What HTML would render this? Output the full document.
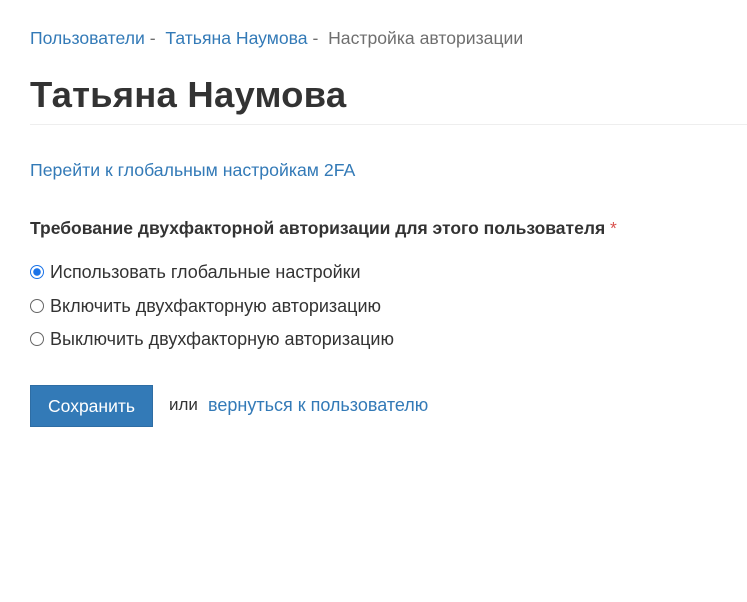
<!DOCTYPE html>
<html><head><meta charset="utf-8"><style>
body{margin:0;background:#fff;font-family:"Liberation Sans",sans-serif;color:#333;}
.a{position:absolute;white-space:nowrap}
a{color:#337ab7;text-decoration:none}
.r{position:absolute;left:30px;width:14px;height:14px;border:1px solid #666;border-radius:50%;box-sizing:border-box}
</style></head><body>
<div class="a" style="left:30px;top:28px;font-size:17.6px;color:#6f6f6f"><a>Пользователи</a> - &nbsp;<a>Татьяна Наумова</a> - &nbsp;Настройка авторизации</div>
<div class="a" style="left:30px;top:74px;font-size:36.5px;font-weight:bold;color:#333;letter-spacing:0.2px">Татьяна Наумова</div>
<div class="a" style="left:30px;top:124px;width:717px;height:1px;background:#eee"></div>
<div class="a" style="left:30px;top:160px;font-size:17.7px"><a>Перейти к глобальным настройкам 2FA</a></div>
<div class="a" style="left:30px;top:218px;font-size:17.5px;font-weight:bold;color:#333">Требование двухфакторной авторизации для этого пользователя <span style="color:#d9534f;font-weight:normal">*</span></div>
<div class="r" style="top:265px;border-color:#1a73e8;background:radial-gradient(circle,#1a73e8 3.5px,#fff 4px)"></div>
<div class="a" style="left:50px;top:262px;font-size:18px">Использовать глобальные настройки</div>
<div class="r" style="top:299px"></div>
<div class="a" style="left:50px;top:296px;font-size:18px">Включить двухфакторную авторизацию</div>
<div class="r" style="top:332px"></div>
<div class="a" style="left:50px;top:329px;font-size:18px">Выключить двухфакторную авторизацию</div>
<div class="a" style="left:30px;top:385px;width:123px;height:42px;background:#337ab7;border:1px solid #2e6da4;box-sizing:border-box;color:#fff;font-size:17.5px;line-height:40px;text-align:center">Сохранить</div>
<div class="a" style="left:169px;top:395px;font-size:17px">или</div>
<div class="a" style="left:208px;top:395px;font-size:18px"><a>вернуться к пользователю</a></div>
</body></html>
